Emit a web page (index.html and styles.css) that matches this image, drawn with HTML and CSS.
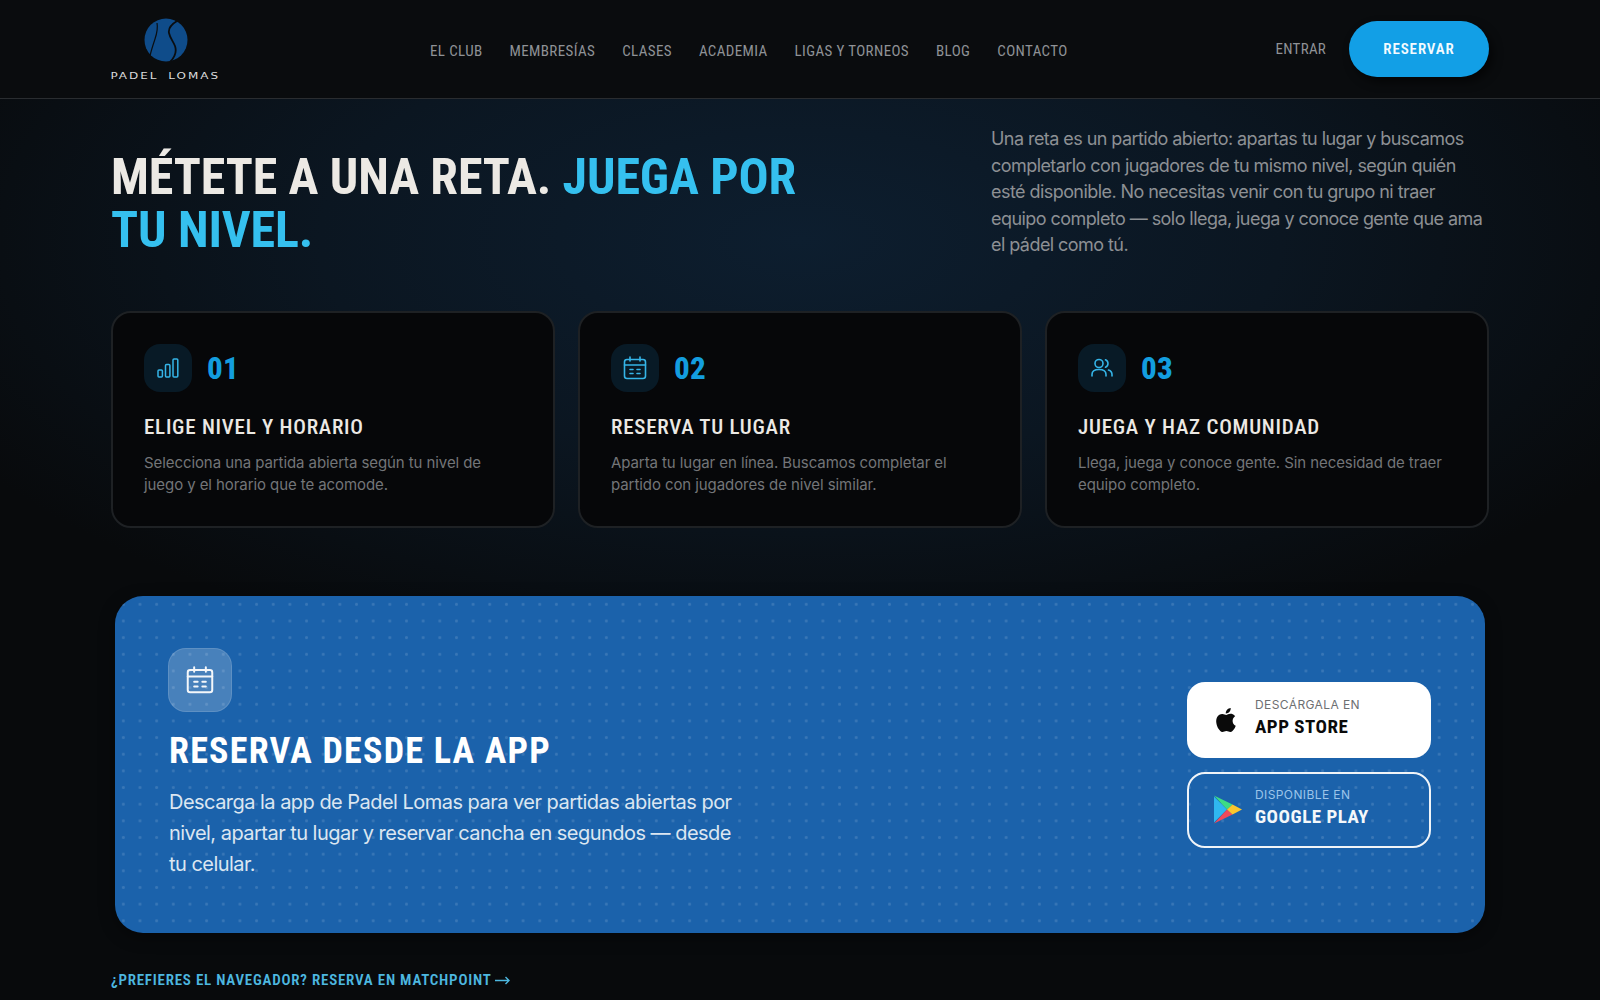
FILE: index.html
```html
<!DOCTYPE html>
<html lang="es">
  <head>
    <meta charset="utf-8">
    <title>Padel Lomas - Retas</title>
    <link rel="stylesheet" href="styles.css">
  </head>
  <body>
    <header class="topbar">
      <a class="logo" href="#">
        <svg class="logo-ball" width="44" height="44" viewBox="0 0 44 44">
          <circle cx="22" cy="22" r="21.5" fill="#0f4c8a"/>
          <path d="M13 5c1 5 0 10-2 16-2 6-4 12-5 17" fill="none" stroke="#0a0d10" stroke-width="1.2"/>
          <path d="M33 3c-5 3-9 7-8 12 1 5 4 8 6 13 2 6 0 11-5 16" fill="none" stroke="#0a0d10" stroke-width="1.8"/>
        </svg>
        <span class="logo-text">PADEL LOMAS</span>
      </a>
      <nav class="menu">
        <a href="#">EL CLUB</a>
        <a href="#">MEMBRESÍAS</a>
        <a href="#">CLASES</a>
        <a href="#">ACADEMIA</a>
        <a href="#">LIGAS Y TORNEOS</a>
        <a href="#">BLOG</a>
        <a href="#">CONTACTO</a>
      </nav>
      <div class="actions">
        <a class="login" href="#">ENTRAR</a>
        <a class="book" href="#">RESERVAR</a>
      </div>
    </header>

    <main class="page">
      <section class="hero">
        <h1>MÉTETE A UNA RETA. <span>JUEGA POR</span><br><span>TU NIVEL.</span></h1>
        <p>Una reta es un partido abierto: apartas tu lugar y buscamos completarlo con jugadores de tu mismo nivel, según quién esté disponible. No necesitas venir con tu grupo ni traer equipo completo — solo llega, juega y conoce gente que ama el pádel como tú.</p>
      </section>

      <section class="steps">
        <article class="card">
          <div class="card-head">
            <div class="icon-box">
              <svg width="24" height="24" viewBox="0 0 24 24" fill="none" stroke="currentColor" stroke-width="1.5"><rect x="2" y="14" width="4.4" height="7" rx="1"/><rect x="9.5" y="8.500" width="4.4" height="12.500" rx="1"/><rect x="17" y="3" width="4.800" height="18" rx="1"/></svg>
            </div>
            <span class="num">01</span>
          </div>
          <h3>ELIGE NIVEL Y HORARIO</h3>
          <p>Selecciona una partida abierta según tu nivel de juego y el horario que te acomode.</p>
        </article>
        <article class="card">
          <div class="card-head">
            <div class="icon-box">
              <svg width="24" height="24" viewBox="0 0 24 24" fill="none" stroke="currentColor" stroke-width="1.6" stroke-linecap="round"><rect x="1.5" y="3.5" width="21" height="19" rx="2.5"/><path d="M1.5 9h21M7 1v4M17 1v4M7 13.500h3M14 13.500h3M7 17.500h3M14 17.500h3"/></svg>
            </div>
            <span class="num">02</span>
          </div>
          <h3>RESERVA TU LUGAR</h3>
          <p>Aparta tu lugar en línea. Buscamos completar el partido con jugadores de nivel similar.</p>
        </article>
        <article class="card">
          <div class="card-head">
            <div class="icon-box">
              <svg width="24" height="24" viewBox="0 0 24 24" fill="none" stroke="currentColor" stroke-width="1.6" stroke-linecap="round"><circle cx="9" cy="7.500" r="4"/><path d="M2 20v-1.500c0-3 2.500-5 7-5s7 2 7 5V20"/><path d="M15.500 3.800a4 4 0 0 1 0 7.400M18.500 14c2 .7 3.500 2.300 3.500 4.500V20"/></svg>
            </div>
            <span class="num">03</span>
          </div>
          <h3>JUEGA Y HAZ COMUNIDAD</h3>
          <p>Llega, juega y conoce gente. Sin necesidad de traer equipo completo.</p>
        </article>
      </section>

      <section class="app-banner">
        <div class="app-copy">
          <div class="app-icon">
            <svg width="28" height="28" viewBox="0 0 24 24" fill="none" stroke="currentColor" stroke-width="1.700" stroke-linecap="round"><rect x="1.500" y="3.500" width="21" height="19" rx="2"/><path d="M1.500 9h21M7 1v4M17 1v4M7 13.500h3M14 13.500h3M7 17.500h3M14 17.500h3"/></svg>
          </div>
          <h2>RESERVA DESDE LA APP</h2>
          <p>Descarga la app de Padel Lomas para ver partidas abiertas por nivel, apartar tu lugar y reservar cancha en segundos — desde tu celular.</p>
        </div>
        <div class="stores">
          <a class="store store-apple" href="#">
            <svg width="24" height="26" viewBox="0 0 24 26"><path fill="#0a0a0a" d="M17.600 13.700c0-3 2.400-4.400 2.600-4.500-1.400-2.100-3.600-2.300-4.400-2.400-1.900-.2-3.600 1.100-4.600 1.100-.9 0-2.400-1.100-4-1-2 0-3.900 1.200-5 3-2.100 3.700-.5 9.200 1.500 12.200 1 1.500 2.200 3.100 3.800 3 1.500-.1 2.100-1 3.900-1 1.800 0 2.400 1 4 1 1.600 0 2.700-1.500 3.700-3 1.200-1.700 1.600-3.300 1.700-3.400-.1 0-3.200-1.200-3.200-5zM14.500 4.700c.8-1 1.400-2.400 1.200-3.800-1.200.1-2.700.8-3.600 1.800-.8.900-1.500 2.400-1.300 3.700 1.400.1 2.800-.7 3.700-1.700z"/></svg>
            <span class="store-text"><small>DESCÁRGALA EN</small><b>APP STORE</b></span>
          </a>
          <a class="store store-google" href="#">
            <svg width="28" height="29" viewBox="0 0 28 29">
              <path fill="#2fb7f0" d="M0 1.500v26L13 14.500z"/>
              <path fill="#3ddc84" d="M0 0.500 13 14.500 18.500 9.500z"/>
              <path fill="#f0495a" d="M0 28.500 13 14.500 18.500 19.500z"/>
              <path fill="#fbc62d" d="M18.500 9.500 28 14.500 18.500 19.500 13 14.500z"/>
            </svg>
            <span class="store-text"><small>DISPONIBLE EN</small><b>GOOGLE PLAY</b></span>
          </a>
        </div>
      </section>

      <a class="browser-link" href="#">¿PREFIERES EL NAVEGADOR? RESERVA EN MATCHPOINT
        <svg width="15" height="9" viewBox="0 0 15 9" fill="none" stroke="currentColor" stroke-width="1.4"><path d="M0 4.500h14M10.500 1l3.500 3.500L10.500 8"/></svg>
      </a>
    </main>
  </body>
</html>
```

FILE: styles.css
```css
* {
  box-sizing: border-box;
}
body {
  margin: 0;
  height: 1000px;
  overflow: hidden;
  background-color: #080a0c;
  background-image: radial-gradient(ellipse 960px 440px at 800px 240px, #0d1e2f 0%, rgba(13, 30, 47, 0.6) 50%, rgba(8, 10, 12, 0) 100%);
  font-family: "Inter", "Noto Sans", sans-serif;
  color: #f0efec;
}
a {
  color: inherit;
  text-decoration: none;
}

/* condensed display face shared by nav, titles and labels */
.menu,
.actions,
.hero h1,
.num,
.card h3,
.app-copy h2,
.store-text b,
.browser-link {
  font-family: "Roboto", sans-serif;
  font-stretch: 75%;
}

/* top bar */
.topbar {
  display: flex;
  align-items: center;
  height: 99px;
  padding: 0 111px;
  background: #0a0c0e;
  border-bottom: 1px solid #2a2d30;
}
.logo {
  display: flex;
  flex-direction: column;
  align-items: center;
  width: 109px;
  margin-top: 2px;
}
.logo-text {
  margin-top: 9px;
  font-family: "DejaVu Sans", sans-serif;
  font-size: 9px;
  line-height: 11px;
  letter-spacing: 1.5px;
  word-spacing: 3px;
  white-space: nowrap;
  color: #dcdcdc;
  transform: scaleX(1.33);
}
.menu {
  display: flex;
  gap: 27px;
  margin-left: 210px;
  margin-top: 4px;
  font-size: 15px;
  letter-spacing: 0.38px;
  color: #8f9296;
}
.actions {
  display: flex;
  align-items: center;
  gap: 23px;
  margin-left: auto;
  margin-top: -1px;
}
.login {
  font-size: 15px;
  letter-spacing: 0.25px;
  color: #8f9296;
}
.book {
  display: flex;
  align-items: center;
  justify-content: center;
  width: 140px;
  height: 56px;
  border-radius: 28px;
  background: #129fe6;
  box-shadow: 4px 5px 10px rgba(0, 0, 0, 0.6);
  color: #f4fbff;
  font-size: 15px;
  font-weight: 600;
  letter-spacing: 0.9px;
}

/* page */
.page {
  padding: 0 111px;
}
.hero {
  display: flex;
  justify-content: space-between;
  height: 212px;
  padding-top: 27px;
}
.hero h1 {
  width: 740px;
  margin: 25px 0 0;
  font-size: 50px;
  line-height: 53px;
  font-weight: 700;
  letter-spacing: -0.1px;
  color: #ece9e4;
}
.hero h1 span {
  color: #35c0ef;
}
.hero p {
  width: 498px;
  margin: 0;
  font-size: 18px;
  line-height: 26.5px;
  letter-spacing: -0.56px;
  color: #8d9094;
}

/* steps */
.steps {
  display: grid;
  grid-template-columns: repeat(3, 1fr);
  gap: 23px;
}
.card {
  height: 217px;
  padding: 31px 31px 0;
  background: #060709;
  border: 2px solid #1e2124;
  border-radius: 20px;
}
.card-head {
  display: flex;
  align-items: center;
  gap: 15px;
}
.icon-box {
  display: flex;
  align-items: center;
  justify-content: center;
  width: 48px;
  height: 48px;
  border-radius: 16px;
  background: #081a26;
  color: #35b5e8;
}
.num {
  font-size: 31px;
  font-weight: 800;
  letter-spacing: 0.3px;
  color: #139ddf;
}
.card h3 {
  margin: 22px 0 0;
  font-size: 21px;
  line-height: 26px;
  font-weight: 500;
  letter-spacing: 0.75px;
  color: #ece9e4;
}
.card p {
  margin: 12px 0 0;
  font-size: 15px;
  line-height: 22px;
  letter-spacing: -0.08px;
  color: #737578;
}

/* app banner */
.app-banner {
  display: flex;
  align-items: center;
  justify-content: space-between;
  height: 337px;
  margin: 68px 4px 0;
  padding: 0 54px 0 53px;
  background-color: #1b62ab;
  background-image: radial-gradient(circle, rgba(255, 255, 255, 0.13) 1.2px, transparent 1.7px);
  background-size: 16.67px 16.67px;
  border-radius: 28px;
  box-shadow: 0 4px 16px rgba(0, 0, 0, 0.4);
}
.app-copy {
  width: 580px;
}
.app-icon {
  display: flex;
  align-items: center;
  justify-content: center;
  width: 64px;
  height: 64px;
  margin-top: -1px;
  border-radius: 18px;
  background: rgba(255, 255, 255, 0.2);
  border: 1px solid rgba(255, 255, 255, 0.12);
  color: #f4f7fa;
}
.app-copy h2 {
  margin: 18px 0 0 1px;
  font-size: 36px;
  line-height: 42px;
  font-weight: 700;
  letter-spacing: 1.25px;
  color: #fff;
}
.app-copy p {
  margin: 15px 0 0 1px;
  font-size: 20px;
  line-height: 31px;
  letter-spacing: -0.53px;
  color: #dbe6f1;
}
.stores {
  display: flex;
  flex-direction: column;
  gap: 14px;
  width: 244px;
}
.store {
  display: flex;
  align-items: center;
  gap: 16px;
  height: 76px;
  padding-left: 28px;
  border-radius: 18px;
}
.store-apple {
  background: #fff;
  color: #0a0a0a;
}
.store-google {
  gap: 13px;
  border: 2px solid #f0f4f8;
  padding-left: 25px;
  color: #f4f7fa;
}
.store-text {
  display: flex;
  flex-direction: column;
  padding-bottom: 5px;
}
.store-text small {
  font-size: 12px;
  line-height: 16px;
  letter-spacing: 0.4px;
  color: #6d6f72;
}
.store-google .store-text small {
  color: #9cc5ea;
}
.store-text b {
  margin-top: 2px;
  font-size: 19px;
  line-height: 23px;
  letter-spacing: 0.5px;
}

.browser-link {
  display: block;
  margin-top: 38px;
  font-size: 15px;
  font-weight: 600;
  letter-spacing: 0.78px;
  color: #4db8e0;
}
```
